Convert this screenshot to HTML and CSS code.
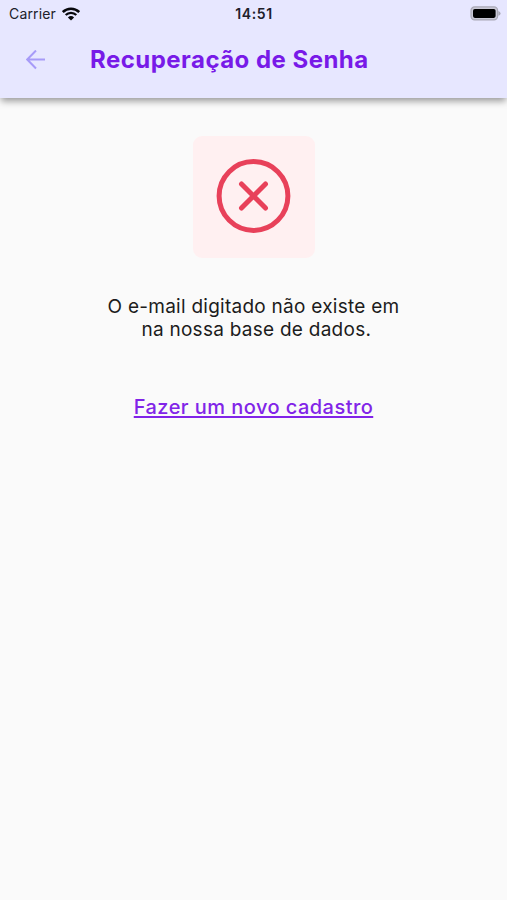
FILE: index.html
```html
<!DOCTYPE html>
<html lang="pt-BR">
<head>
  <meta charset="UTF-8"/>
  <meta name="viewport" content="width=device-width, initial-scale=1.0"/>
  <title>Recuperação de Senha</title>
  <link rel="stylesheet" href="styles.css">
</head>
<body>
  <header class="app-bar">
    <div class="status-bar">
      <div class="carrier">
        <span>Carrier</span>
        <svg class="wifi" viewBox="0 0 18 14" width="18" height="14">
          <path d="M0.8 5 A11.7 11.7 0 0 1 17.2 5" fill="none" stroke="#08080c" stroke-width="2.5"/>
          <path d="M3.7 8 A7.5 7.5 0 0 1 14.3 8" fill="none" stroke="#08080c" stroke-width="2.3"/>
          <path d="M9 13.6 L5.9 10.4 A4.6 4.6 0 0 1 12.1 10.4 Z" fill="#08080c"/>
        </svg>
      </div>
      <span class="time">14:51</span>
      <svg class="battery" viewBox="0 0 31 15" width="31" height="15">
        <rect x="1" y="0.9" width="26.6" height="13" rx="3.6" fill="#c9c8d6" stroke="#a9a8b5" stroke-width="1.2"/>
        <rect x="3" y="2.9" width="22.6" height="9" rx="1.8" fill="#000"/>
        <path d="M28.3 5 Q30.6 5.8 30.6 7.4 Q30.6 9 28.3 9.8 Z" fill="#a9a8b5"/>
      </svg>
    </div>
    <div class="toolbar">
      <a class="back" href="#" aria-label="Voltar">
        <svg viewBox="0 0 20 20" width="20" height="20">
          <path d="M19 9.5 H1.5 M10 0.5 L1.2 9.5 L10 18.5" fill="none" stroke="#a79bf8" stroke-width="2"/>
        </svg>
      </a>
      <h1>Recuperação de Senha</h1>
    </div>
  </header>

  <main class="content">
    <div class="error-box">
      <svg viewBox="0 0 76 76" width="76" height="76">
        <circle cx="37.5" cy="37" r="34.4" fill="none" stroke="#e8415a" stroke-width="5"/>
        <path d="M25.5 25 L49.5 49 M49.5 25 L25.5 49" fill="none" stroke="#e8415a" stroke-width="5" stroke-linecap="round"/>
      </svg>
    </div>
    <p class="message">O e-mail digitado não existe em<br>&nbsp;na nossa base de dados.</p>
    <a class="signup" href="#">Fazer um novo cadastro</a>
  </main>
</body>
</html>
```

FILE: styles.css
```css
body {
  margin:0; padding:0;
  min-height:100vh;
  font-family:'Inter',sans-serif;
  background:#fafafa;
  display:flex; flex-direction:column;
}

/* Header */
.app-bar {
  height:98px;
  background:#e7e7ff;
  box-shadow:0 4px 7px -1px rgba(0,0,0,0.4);
}
.status-bar {
  display:grid; grid-template-columns:1fr auto 1fr; align-items:center;
  height:27px; padding:0 6px 0 9px;
  color:#20202a; font-size:14px;
}
.carrier { display:flex; align-items:center; gap:6px; letter-spacing:.15px; }
.time { margin-left:-2px; font-weight:600; letter-spacing:.6px; }
.battery { justify-self:end; }

.toolbar {
  display:flex; align-items:center;
  height:65px; padding-left:26px;
}
.back { display:flex; width:64px; }
h1 {
  margin:0;
  font-size:24px; font-weight:650; letter-spacing:.47px;
  color:#781ae8;
}

/* Content */
.content {
  display:flex; flex-direction:column; align-items:center;
  padding-top:38px;
}
.error-box {
  display:flex; justify-content:center; align-items:center;
  width:122px; height:122px;
  background:#fff0f1; border-radius:9px;
}
.message {
  margin:37px 0 0;
  font-size:19px; line-height:23px; letter-spacing:.26px;
  text-align:center; color:#1c1c1c;
}
.signup {
  margin-top:54px;
  font-size:20px; line-height:24px; font-weight:500; letter-spacing:.45px;
  text-underline-offset:2px;
  color:#8124e8;
}
```
